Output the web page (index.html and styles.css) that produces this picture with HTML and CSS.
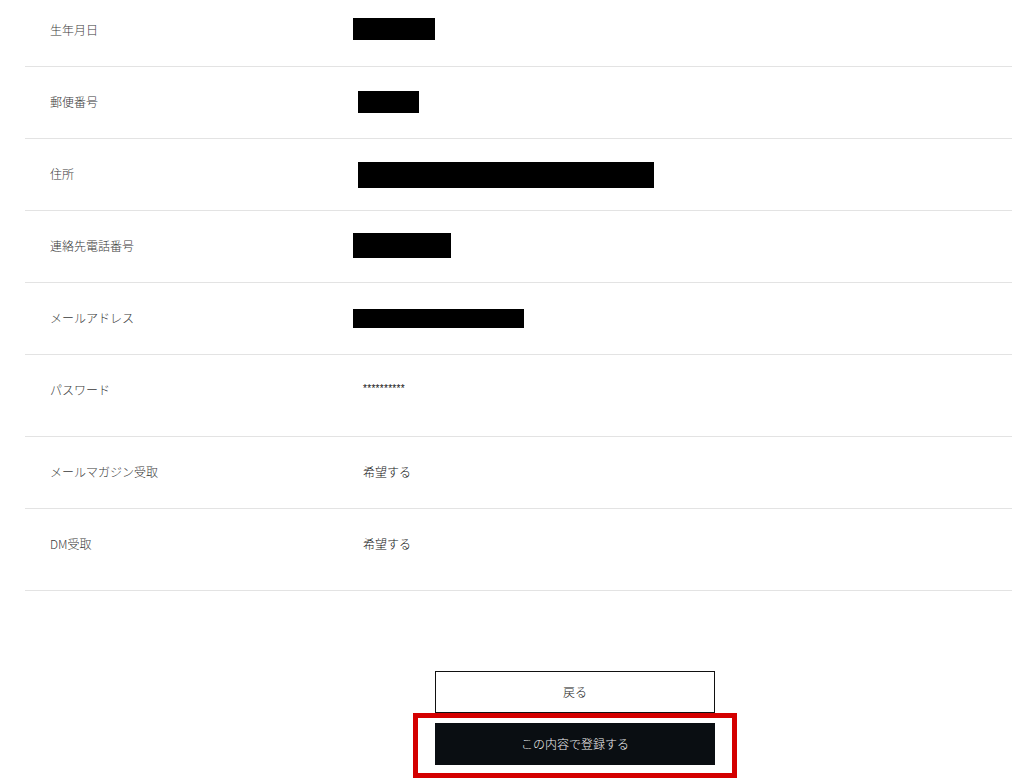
FILE: index.html
```html
<!DOCTYPE html>
<html lang="ja">
<head>
<meta charset="utf-8">
<title>確認</title>
<link rel="stylesheet" href="styles.css">
</head>
<body>
<div class="page">
  <dl class="table">
    <div class="row">
      <dt class="label">生年月日</dt>
      <dd class="value"><span class="redact r1"></span></dd>
    </div>
    <div class="row">
      <dt class="label">郵便番号</dt>
      <dd class="value"><span class="redact r2"></span></dd>
    </div>
    <div class="row">
      <dt class="label">住所</dt>
      <dd class="value"><span class="redact r3"></span></dd>
    </div>
    <div class="row">
      <dt class="label">連絡先電話番号</dt>
      <dd class="value"><span class="redact r4"></span></dd>
    </div>
    <div class="row">
      <dt class="label">メールアドレス</dt>
      <dd class="value"><span class="redact r5"></span></dd>
    </div>
    <div class="row tall">
      <dt class="label">パスワード</dt>
      <dd class="value text pw">**********</dd>
    </div>
    <div class="row">
      <dt class="label">メールマガジン受取</dt>
      <dd class="value text">希望する</dd>
    </div>
    <div class="row tall">
      <dt class="label">DM受取</dt>
      <dd class="value text">希望する</dd>
    </div>
  </dl>
  <div class="actions">
    <button class="btn btn-back" type="button">戻る</button>
    <div class="submit-wrap">
      <button class="btn btn-submit" type="submit">この内容で登録する</button>
      <span class="highlight"></span>
    </div>
  </div>
</div>
</body>
</html>
```
FILE: styles.css
```css
html, body {
  margin: 0;
  padding: 0;
  background: #fff;
}
body {
  font-family: "Noto Sans CJK JP", "Noto Sans", "Liberation Sans", sans-serif;
  font-size: 12px;
  font-weight: 300;
  color: #222;
  width: 1012px;
  height: 784px;
  overflow: hidden;
}
.page {
  margin-left: 25px;
  margin-top: -5px;
}
.table {
  margin: 0;
  padding: 0;
}
.row {
  display: flex;
  align-items: flex-start;
  min-height: 71px;
  border-bottom: 1px solid #e3e3e3;
}
.row.tall {
  min-height: 81px;
}
.label {
  margin: 0;
  width: 303px;
  padding: 28px 0 0 25px;
  line-height: 14px;
  color: #3a3a3a;
}
.value {
  margin: 0;
  padding: 0;
}
.value.text {
  padding: 28px 0 0 10px;
  line-height: 14px;
  color: #111;
}
.value.pw {
  font-family: "Liberation Sans", sans-serif;
  font-weight: 400;
  font-size: 10px;
  padding-top: 27px;
  letter-spacing: 0.3px;
}
.redact {
  display: block;
  background: #000;
}
.r1 { width: 82px; height: 22px; margin-top: 23px; }
.r2 { width: 61px; height: 22px; margin-top: 24px; margin-left: 5px; }
.r3 { width: 296px; height: 26px; margin-top: 23px; margin-left: 5px; }
.r4 { width: 98px; height: 25px; margin-top: 22px; }
.r5 { width: 171px; height: 19px; margin-top: 26px; }

.actions {
  display: flex;
  flex-direction: column;
  gap: 10px;
  padding: 80px 0 0 410px;
}
.btn {
  display: flex;
  align-items: center;
  justify-content: center;
  width: 280px;
  height: 42px;
  font-family: inherit;
  font-size: 12px;
  font-weight: 300;
  padding: 0;
  margin: 0;
  border-radius: 0;
  cursor: pointer;
  box-sizing: border-box;
}
.btn-back {
  background: #fff;
  color: #222;
  border: 1px solid #111;
  padding-bottom: 2px;
}
.submit-wrap {
  position: relative;
  width: 280px;
  height: 42px;
}
.btn-submit {
  background: #0a0e12;
  color: #f2f2f2;
  border: none;
  padding-bottom: 1px;
}
.highlight {
  position: absolute;
  left: -22px;
  top: -10px;
  width: 314px;
  height: 55px;
  border: 5px solid #d40000;
  pointer-events: none;
}
```
